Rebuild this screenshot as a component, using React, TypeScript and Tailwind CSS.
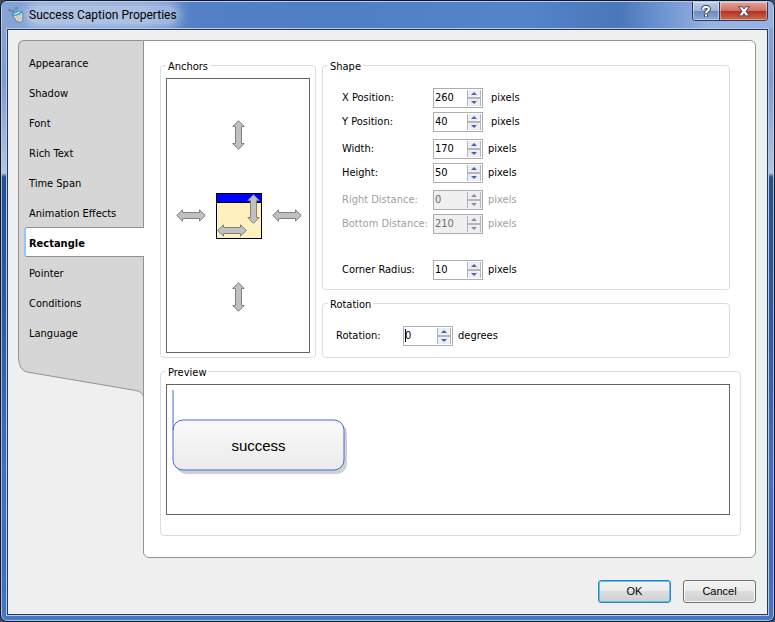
import React, { useId, useState } from "react";

const uiFont = "font-['DejaVu_Sans_Condensed','Noto_Sans',sans-serif]";

const sections = [
  "Appearance",
  "Shadow",
  "Font",
  "Rich Text",
  "Time Span",
  "Animation Effects",
  "Rectangle",
  "Pointer",
  "Conditions",
  "Language",
];

function AppIcon() {
  return (
    <svg width="16" height="16" viewBox="0 0 16 16" aria-hidden="true">
      <path d="M4.5 8 L14.5 4.5 L14.8 13 L12.5 15.3 L8.5 14.5 Z" fill="#d9d9d7" stroke="#6f7377" strokeWidth="0.9" />
      <path d="M8.5 9.5 l1.2 1.4 M12 7.5 l-.8 2 M9.5 12.5 l1.6 -1 M12.6 10.6 l.6 1.6" stroke="#98989a" strokeWidth="0.8" />
      <path d="M2.8 8 L9 4.2 L15 3.8 L12.5 7 L7.5 9 Z" fill="#2a9fcb" />
      <path d="M5.5 7.3 L12 4.3 L11 6 L7 7.8 Z" fill="#eef8fc" />
      <circle cx="1.7" cy="3.2" r="1" fill="none" stroke="#54788f" strokeWidth="0.9" />
      <circle cx="5" cy="4.3" r="1.1" fill="none" stroke="#54788f" strokeWidth="0.9" />
      <circle cx="8.2" cy="1.5" r="1" fill="none" stroke="#54788f" strokeWidth="0.9" />
    </svg>
  );
}

function TitleBar() {
  return (
    <header className="flex h-[26px] items-start justify-between pl-[6px] pr-[5px] bg-[linear-gradient(90deg,#86a4d6_0%,#7d9ed4_18%,#5380c4_25%,#4f7fc4_45%,#5484c9_68%,#4a77b9_80%,#6f96d2_86%,#9ab3e0_92%,#93b1e2_100%)]">
      <div className="flex h-[26px] items-center gap-[5px]">
        <AppIcon />
        <h1 className="rounded-full bg-white/35 text-[12px] leading-[18px] text-black font-['Roboto',sans-serif] shadow-[0_0_8px_4px_rgba(255,255,255,0.35)]">
          Success Caption Properties
        </h1>
      </div>
      <div className="flex h-[19px] overflow-hidden rounded-b-[4px] border border-t-0 border-[#2b3a58]">
        <button
          type="button"
          aria-label="Help"
          className="flex w-[27px] items-center justify-center border-r border-[#2b3a58] bg-[linear-gradient(180deg,#b9cbe8_0%,#9fb5da_48%,#6c88b8_50%,#8fabda_100%)] shadow-[inset_0_0_0_1px_rgba(255,255,255,0.45)]"
        >
          <svg width="10" height="13" viewBox="0 0 10 13" fill="none" aria-hidden="true">
            <path d="M2 4.6 C2 1.2 8 1.2 8 4 C8 6 5 5.8 5 8.2 M5 9.4 V12" stroke="#43495a" strokeWidth="4" />
            <path d="M2 4.4 C2 1.2 8 1.2 8 4 C8 6 5 5.8 5 8 M5 9.4 V11.4" stroke="#fff" strokeWidth="2" />
          </svg>
        </button>
        <button
          type="button"
          aria-label="Close"
          className="flex w-[47px] items-center justify-center bg-[linear-gradient(180deg,#e0a49a_0%,#cf6f62_48%,#b03022_50%,#cf6a4c_100%)] shadow-[inset_0_0_0_1px_rgba(255,255,255,0.4)]"
        >
          <svg width="12" height="11" viewBox="0 0 12 11" aria-hidden="true">
            <path
              d="M.7 .7 H4.3 L6 2.9 L7.7 .7 H11.3 L8.1 5.2 L11.3 9.9 H7.7 L6 7.6 L4.3 9.9 H.7 L3.9 5.2 Z"
              fill="#f6f6f6"
              stroke="#554450"
              strokeWidth="1"
            />
          </svg>
        </button>
      </div>
    </header>
  );
}

function Sidebar({ active, onSelect }: { active: string; onSelect: (s: string) => void }) {
  return (
    <nav className="w-[125px] shrink-0">
      <ul className="rounded-tl-[6px] border-l border-t border-[#929292] bg-[#d6d6d6] pl-[5px] pt-[6px]">
        {sections.map((s) => (
          <li key={s} className="flex">
            <button
              type="button"
              onClick={() => onSelect(s)}
              className={
                s === active
                  ? "relative z-10 -mr-px h-[30px] flex-1 rounded-l-[3px] border-y border-l-2 border-y-[#8f8f8f] border-l-[#94c6fb] bg-white pl-[3px] pt-[2px] text-left font-bold"
                  : "h-[30px] flex-1 pl-[5px] pt-[2px] text-left"
              }
            >
              {s}
            </button>
          </li>
        ))}
      </ul>
      <svg width="126" height="50" viewBox="0 0 126 50" className="block max-w-none" aria-hidden="true">
        <path d="M.5 0 V11 Q1 23 9 25 L118 43.5 Q125 45 125.5 50 V0 Z" fill="#d6d6d6" />
        <path d="M.5 0 V11 Q1 23 9 25 L118 43.5 Q125 45 125.5 50" fill="none" stroke="#929292" />
      </svg>
    </nav>
  );
}

function Group({
  title,
  className = "",
  bodyClass = "",
  children,
}: {
  title: string;
  className?: string;
  bodyClass?: string;
  children: React.ReactNode;
}) {
  return (
    <fieldset className={`min-w-0 rounded-[4px] border border-[#d5dfe5] ${className}`}>
      <legend className="ml-[5px] px-[2px] pt-[2px] leading-[13px]">{title}</legend>
      <div className={bodyClass}>{children}</div>
    </fieldset>
  );
}

function Arrow({ label, vertical = false, className = "" }: { label: string; vertical?: boolean; className?: string }) {
  return (
    <button type="button" aria-label={label} className={`block ${className}`}>
      <svg width={vertical ? 14 : 30} height={vertical ? 30 : 13} viewBox={vertical ? "0 0 14 30" : "0 0 30 13"}>
        <path
          d={
            vertical
              ? "M6.5 .7 L12.2 6.5 H9.5 V23.5 H12.2 L6.5 29.3 L.8 23.5 H3.5 V6.5 H.8 Z"
              : "M.7 6.5 L6.5 .8 V3.5 H23.5 V.8 L29.3 6.5 L23.5 12.2 V9.5 H6.5 V12.2 Z"
          }
          fill="#c0c0c0"
          stroke="#808080"
        />
      </svg>
    </button>
  );
}

function Anchors() {
  return (
    <div className="flex h-[275px] flex-col items-center justify-center gap-[43px] border border-[#646464] pl-[2px]">
      <Arrow label="Anchor top" vertical />
      <div className="flex items-center gap-[10px]">
        <Arrow label="Anchor left" />
        <div className="relative h-[46px] w-[46px] border border-black bg-[#fff0c0]">
          <div className="h-[9px] border-b border-black bg-[#0000ff]" />
          <Arrow label="Stretch height" vertical className="absolute right-0 top-0" />
          <Arrow label="Stretch width" className="absolute bottom-px left-0" />
        </div>
        <Arrow label="Anchor right" />
      </div>
      <Arrow label="Anchor bottom" vertical />
    </div>
  );
}

function StepButton({ label, up = false, disabled, onClick }: { label: string; up?: boolean; disabled: boolean; onClick: () => void }) {
  return (
    <button
      type="button"
      tabIndex={-1}
      aria-label={label}
      disabled={disabled}
      onClick={onClick}
      className="flex h-[7px] items-center justify-center border-x border-x-[#b4b5bd] bg-[#eeeff2]"
    >
      <svg width="6" height="3" viewBox="0 0 6 3" aria-hidden="true">
        <path d={up ? "M0 3 L3 0 L6 3 Z" : "M0 0 L3 3 L6 0 Z"} fill={disabled ? "#8c8c8c" : "#4463b8"} />
      </svg>
    </button>
  );
}

interface FieldProps {
  label: string;
  initial: string;
  unit: string;
  disabled?: boolean;
  caret?: boolean;
  labelClass?: string;
  gapClass?: string;
}

function Field({
  label,
  initial,
  unit,
  disabled = false,
  caret = false,
  labelClass = "w-[91px]",
  gapClass = "ml-[5px]",
}: FieldProps) {
  const id = useId();
  const [value, setValue] = useState(initial);
  const step = (d: number) => setValue(String(Number(value) + d));
  return (
    <div className={`flex h-[20px] items-center whitespace-nowrap ${disabled ? "text-[#a0a0a0]" : "text-black"}`}>
      <label htmlFor={id} className={`shrink-0 pb-[2px] ${labelClass}`}>
        {label}
      </label>
      <div className={`relative flex h-[20px] w-[50px] shrink-0 border border-[#abadb3] ${disabled ? "bg-[#f0f0f0] text-[#6d6d6d]" : "bg-white"}`}>
        <input
          id={id}
          type="text"
          value={value}
          disabled={disabled}
          onChange={(e) => setValue(e.target.value)}
          className="w-[33px] min-w-0 bg-transparent pb-[2px] pl-px outline-none"
        />
        {caret && <span className="absolute left-px top-[2px] h-[13px] w-px bg-black" />}
        <div className="my-px mr-px flex w-[14px] flex-col gap-[2px] bg-[#b4b5bd]">
          <StepButton label={`Increase ${label}`} up disabled={disabled} onClick={() => step(1)} />
          <StepButton label={`Decrease ${label}`} disabled={disabled} onClick={() => step(-1)} />
        </div>
      </div>
      <span className={`pb-[2px] ${gapClass}`}>{unit}</span>
    </div>
  );
}

function Preview() {
  return (
    <div className="border border-[#646464] pb-[40px] pl-[5px] pt-[5px]">
      <div className="relative w-[176px] pb-[4px] pt-[29px]">
        <svg width="176" height="84" viewBox="0 0 176 84" className="absolute left-0 top-0" aria-hidden="true">
          <defs>
            <linearGradient id="caption-fill" x1="0" y1="0" x2="0" y2="1">
              <stop offset="0" stopColor="#fafafa" />
              <stop offset="1" stopColor="#ebebeb" />
            </linearGradient>
          </defs>
          <rect x="4" y="33" width="171" height="51" rx="10" fill="#d0d0d0" />
          <rect x="1" y="30" width="171" height="50" rx="10" fill="url(#caption-fill)" stroke="#4169e1" />
          <path d="M1 0 V40" stroke="#4169e1" />
        </svg>
        <p className="relative flex h-[51px] w-[173px] items-center justify-center pt-[2px] text-[15px] text-black font-['Liberation_Sans',Arial,sans-serif]">
          success
        </p>
      </div>
    </div>
  );
}

export default function App() {
  const [active, setActive] = useState("Rectangle");
  return (
    <div className="min-h-screen bg-[#3a4a60]">
      <div
        className={`flex min-h-screen flex-col overflow-hidden rounded-[7px] border border-[#10182a] bg-[linear-gradient(180deg,#8ba7d8_0px,#7d9cd0_80px,#b4c4e2_172px,#24508f_176px,#2c5ca2_330px,#4272bd_480px,#3c6cba_560px,#4677c4_100%)] text-[11px] leading-[13px] text-black ${uiFont}`}
      >
        <div className="flex flex-1 flex-col rounded-[6px] border border-[#c3d3ee]/80">
          <TitleBar />
          <div className="mx-[4px] mb-[4px] flex flex-1 flex-col border border-[#b5c8ea]">
            <main className="flex-1 border border-[#26395c] bg-[#efefef] pb-[11px] pl-[10px] pr-[11px] pt-[10px]">
              <div className="flex items-start">
                <Sidebar active={active} onSelect={setActive} />
                <section className="min-w-0 flex-1 rounded-b-[6px] rounded-tr-[6px] border border-[#929292] bg-white pb-[21px] pl-[16px] pr-[14px] pt-[17px]">
                  <div className="mr-[11px] flex gap-[6px]">
                    <Group title="Anchors" className="w-[156px] shrink-0" bodyClass="px-[5px] pb-[4px] pt-[5px]">
                      <Anchors />
                    </Group>
                    <div className="flex min-w-0 flex-1 flex-col gap-[6px]">
                      <Group title="Shape" bodyClass="flex flex-col gap-[7px] pb-[9px] pl-[19px] pt-[15px]">
                        <div className="flex flex-col gap-[4px]">
                          <Field label="X Position:" initial="260" unit="pixels" gapClass="ml-[8px]" />
                          <Field label="Y Position:" initial="40" unit="pixels" gapClass="ml-[8px]" />
                        </div>
                        <div className="flex flex-col gap-[4px]">
                          <Field label="Width:" initial="170" unit="pixels" />
                          <Field label="Height:" initial="50" unit="pixels" />
                        </div>
                        <div className="flex flex-col gap-[4px]">
                          <Field label="Right Distance:" initial="0" unit="pixels" disabled />
                          <Field label="Bottom Distance:" initial="210" unit="pixels" disabled />
                        </div>
                        <div className="pt-[19px]">
                          <Field label="Corner Radius:" initial="10" unit="pixels" />
                        </div>
                      </Group>
                      <Group title="Rotation" className="flex-1" bodyClass="pb-[11px] pl-[13px] pt-[15px]">
                        <Field label="Rotation:" initial="0" unit="degrees" caret labelClass="w-[67px]" />
                      </Group>
                    </div>
                  </div>
                  <Group title="Preview" className="mt-[6px]" bodyClass="pb-[20px] pl-[5px] pr-[10px] pt-[5px]">
                    <Preview />
                  </Group>
                </section>
              </div>
              <footer className="mt-[22px] flex justify-end gap-[12px] font-['Liberation_Sans',Arial,sans-serif]">
                <button
                  type="button"
                  className="h-[23px] w-[73px] rounded-[3px] border border-[#3c7fb1] bg-[linear-gradient(180deg,#f2f2f2_0%,#ebebeb_48%,#dddddd_50%,#cfcfcf_100%)] shadow-[inset_0_0_0_1px_#4cc8f0]"
                >
                  OK
                </button>
                <button
                  type="button"
                  className="h-[23px] w-[73px] rounded-[3px] border border-[#707070] bg-[linear-gradient(180deg,#f2f2f2_0%,#ebebeb_48%,#dddddd_50%,#cfcfcf_100%)] shadow-[inset_0_0_0_1px_#f8f8f8]"
                >
                  Cancel
                </button>
              </footer>
            </main>
          </div>
        </div>
      </div>
    </div>
  );
}
